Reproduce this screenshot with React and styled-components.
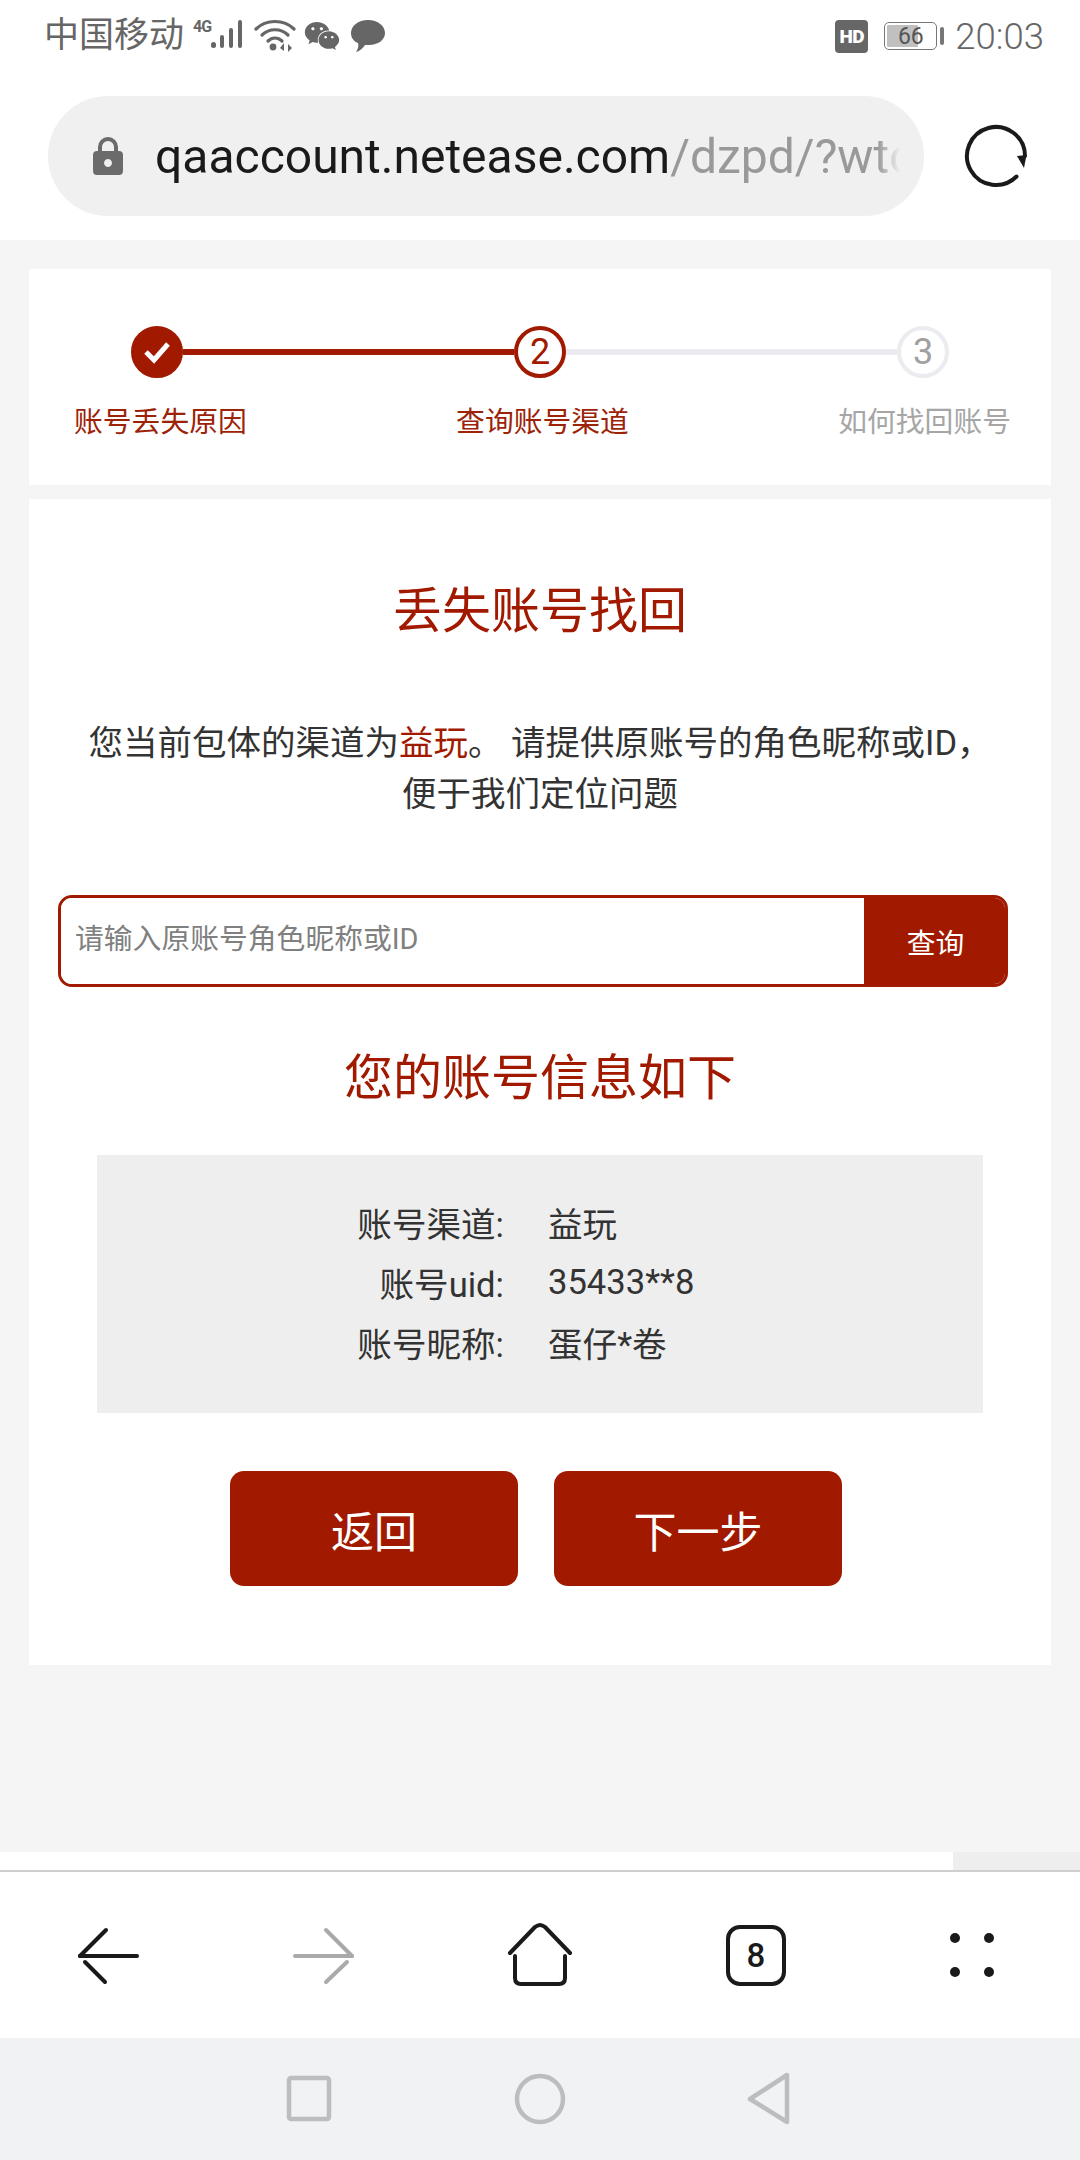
import React from "react";
import styled, { createGlobalStyle } from "styled-components";
import { FaWeixin } from "react-icons/fa";

const RED = "#a11a00";
const FONT = `Roboto, "Noto Sans CJK SC", sans-serif`;

const Global = createGlobalStyle`
  html, body { margin: 0; padding: 0; background: #fff; }
  * { box-sizing: border-box; }
  body { font-family: ${FONT}; }
`;

const Screen = styled.div`
  width: 1080px; height: 2160px; display: flex; flex-direction: column;
  background: #f5f5f6; overflow: hidden; font-family: ${FONT};
`;
const Header = styled.header`
  background: #fff; height: 240px; flex: none; display: flex; flex-direction: column;
`;
const StatusBar = styled.div`
  height: 72px; padding: 0 36px 0 44px; display: flex; align-items: center;
  justify-content: space-between; color: #666;
`;
const StatusGroup = styled.div`display: flex; align-items: center;`;
const Carrier = styled.span`font-size: 35px; line-height: 40px; font-weight: 400;`;
const NetLabel = styled.span`
  font-size: 16px; font-weight: 700; line-height: 16px; align-self: flex-start;
  margin: 3px 0 0 9px; width: 17px; letter-spacing: -1px;
`;
const HdBadge = styled.span`
  width: 33px; height: 33px; border-radius: 4px; background: #666; color: #fff;
  font-size: 19px; font-weight: 900; display: flex; align-items: center; justify-content: center;
  letter-spacing: -0.5px;
`;
const Battery = styled.div`
  width: 53px; height: 28px; margin-left: 16px; border: 1.5px solid #777; border-radius: 5px;
  padding: 2px; position: relative; display: flex;
`;
const BatteryFill = styled.div`width: 66%; background: #c0c0c0; border-radius: 1px;`;
const BatteryText = styled.span`
  position: absolute; inset: 0; display: flex; align-items: center; justify-content: center;
  font-size: 23px; color: #555; line-height: 1;
`;
const BatteryNub = styled.div`width: 4px; height: 18px; margin-left: 3px; background: #777; border-radius: 2px;`;
const Clock = styled.span`font-size: 36.5px; margin-left: 11px; font-weight: 300; color: #666;`;

const AddressRow = styled.div`
  margin-top: 24px; padding-left: 48px; display: flex; align-items: center;
`;
const AddressPill = styled.div`
  width: 876px; height: 120px; border-radius: 60px; background: #f0f0f0;
  display: flex; align-items: center; padding: 0 24px 0 45px;
`;
const LockIcon = styled.svg`width: 30px; height: 40px; flex: none;`;
const Url = styled.div`
  margin-left: 32px; flex: 1; min-width: 0; overflow: hidden; white-space: nowrap;
  font-size: 48px; line-height: 60px; color: #999; padding-top: 2px;
  -webkit-mask-image: linear-gradient(to right, #000 97%, transparent 100%);
  mask-image: linear-gradient(to right, #000 97%, transparent 100%);
`;
const Host = styled.span`color: #1a1a1a;`;
const ReloadIcon = styled.svg`width: 64px; height: 64px; margin-left: 40px; flex: none;`;

const Main = styled.main`
  flex: 1; min-height: 0; padding: 29px 29px 0; display: flex; flex-direction: column; gap: 14px;
`;
const Card = styled.section`background: #fff;`;
const Steps = styled(Card)`height: 216px; padding-top: 57px;`;
const Track = styled.div`display: flex; align-items: center; padding: 0 102px;`;
const StepDot = styled.div`
  width: 52px; height: 52px; border-radius: 50%; flex: none; display: flex; align-items: center;
  justify-content: center; font-size: 36px; font-weight: 400;
  background: ${p => (p.$state === "done" ? RED : "#fff")};
  border: ${p => (p.$state === "todo" ? "4px solid #ececf0" : `4px solid ${RED}`)};
  color: ${p => (p.$state === "todo" ? "#a0a0a0" : RED)};
`;
const TrackLine = styled.div`flex: 1; height: 6px; background: ${p => (p.$on ? RED : "#ececf0")};`;
const StepLabels = styled.div`
  display: flex; justify-content: space-between; margin-top: 24px; padding: 0 40px 0 45px;
`;
const StepLabel = styled.span`
  font-size: 28.8px; line-height: 40px; font-weight: 400; color: ${p => (p.$on ? "#9c2208" : "#a6a6a6")};
`;

const Body = styled(Card)`height: 1166px; padding-top: 78px; display: flex; flex-direction: column; align-items: center;`;
const Title = styled.h1`
  margin: 0; font-size: 49px; line-height: 70px; font-weight: 400; color: ${RED}; text-align: center;
`;
const Intro = styled.p`
  margin: 71px 0 0; width: 940px; font-size: 34.5px; line-height: 51px; font-weight: 400; color: #333;
  text-align: center;
`;
const Accent = styled.span`color: ${RED};`;
const Search = styled.div`
  align-self: flex-start; margin: 75px 0 0 29px; width: 950px; height: 92px; display: flex;
  border: 3px solid ${RED}; border-radius: 14px; overflow: hidden;
`;
const SearchInput = styled.input`
  flex: 1; min-width: 0; border: 0; outline: 0; padding: 0 0 5px 14px; font-size: 28.8px; font-weight: 400;
  font-family: ${FONT}; background: #fff;
  &::placeholder { color: #808080; opacity: 1; }
`;
const SearchButton = styled.button`
  width: 141px; border: 0; background: ${RED}; color: #fff; font-size: 28.8px; font-weight: 400;
  font-family: ${FONT}; padding: 0 0 0 2px;
`;
const Subtitle = styled.h2`
  margin: 57px 0 0; font-size: 49px; line-height: 70px; font-weight: 400; color: ${RED};
`;
const InfoBox = styled.div`
  margin-top: 41px; width: 886px; height: 258px; background: #eeeeee; padding-top: 37px;
  display: grid; grid-template-columns: 407px 1fr; column-gap: 44px; grid-auto-rows: 60px;
  align-items: center; font-size: 34.6px; font-weight: 400; color: #333;
`;
const InfoKey = styled.span`text-align: right;`;
const InfoValue = styled.span``;
const Actions = styled.div`margin: 58px 8px 0 0; display: flex; gap: 36px;`;
const ActionButton = styled.button`
  width: 288px; height: 115px; border: 0; border-radius: 14px; background: ${RED}; color: #fff;
  font-size: 43px; font-weight: 400; font-family: ${FONT}; padding: 0;
`;

const Tail = styled.div`height: 18px; flex: none; background: #fff; display: flex; justify-content: flex-end;`;
const ScrollThumb = styled.div`width: 127px; background: #eeeeee;`;
const Divider = styled.div`height: 2px; flex: none; background: #cfcfcf;`;
const Toolbar = styled.nav`
  height: 166px; flex: none; background: #fff; display: grid; grid-template-columns: repeat(5, 216px);
  justify-items: center; align-items: center;
`;
const ToolIcon = styled.svg`width: 72px; height: 72px; display: block;`;
const TabCount = styled.div`
  width: 60px; height: 61px; border: 4px solid #1a1a1a; border-radius: 14px; display: flex;
  align-items: center; justify-content: center; font-size: 33px; font-weight: 500; color: #1a1a1a;
`;
const SystemBar = styled.div`
  height: 122px; flex: none; background: #f1f2f4; display: flex; align-items: center;
  justify-content: center; gap: 170px;
`;
const SysIcon = styled.svg`width: 60px; height: 60px; display: block;`;

const Signal = () => (
  <svg width="36" height="36" viewBox="0 0 36 36">
    <g fill="#666">
      <rect x="1" y="24" width="5" height="6" rx="2.5" />
      <rect x="10" y="17" width="4" height="13" rx="2" />
      <rect x="19" y="10" width="4" height="20" rx="2" />
      <rect x="28" y="2" width="4" height="28" rx="2" />
    </g>
  </svg>
);
const Wifi = () => (
  <svg width="42" height="36" viewBox="0 0 42 36" style={{ marginLeft: 8 }}>
    <g fill="none" stroke="#666" strokeWidth="3.2" strokeLinecap="round">
      <path d="M2 11 C12 1 30 1 40 11" />
      <path d="M8 17 C15 10 27 10 34 17" />
      <path d="M14 23 C18 19 24 19 28 23" />
    </g>
    <circle cx="19" cy="29" r="3.4" fill="#666" />
    <path d="M30 25 v8 l-4-3z M34 26 v8 l4-4z" fill="#666" />
  </svg>
);
const Bubble = () => (
  <svg width="36" height="34" viewBox="0 0 36 34" style={{ marginLeft: 10 }}>
    <path d="M18 1 C28 1 35 7 35 14 C35 21 28 26 19 26 C17 26 16 26 15 26 C13 29 10 32 6 33 C8 30 9 27 8 24 C3 22 1 18 1 14 C1 7 8 1 18 1Z" fill="#666" />
  </svg>
);

export default function App() {
  return (
    <Screen>
      <Global />
      <Header>
        <StatusBar>
          <StatusGroup>
            <Carrier>中国移动</Carrier>
            <NetLabel>4G</NetLabel>
            <Signal />
            <Wifi />
            <FaWeixin size={36} color="#666" style={{ marginLeft: 8 }} />
            <Bubble />
          </StatusGroup>
          <StatusGroup>
            <HdBadge>HD</HdBadge>
            <Battery>
              <BatteryFill />
              <BatteryText>66</BatteryText>
            </Battery>
            <BatteryNub />
            <Clock>20:03</Clock>
          </StatusGroup>
        </StatusBar>
        <AddressRow>
          <AddressPill>
            <LockIcon viewBox="0 0 30 40">
              <path d="M7 17 V11 a8 8 0 0 1 16 0 V17" fill="none" stroke="#6b6b6b" strokeWidth="4" />
              <path fillRule="evenodd" fill="#6b6b6b" d="M4 15 H26 a4 4 0 0 1 4 4 V35 a4 4 0 0 1 -4 4 H4 a4 4 0 0 1 -4 -4 V19 a4 4 0 0 1 4 -4Z M15 23 a4 4 0 1 0 0.01 0Z" />
            </LockIcon>
            <Url><Host>qaaccount.netease.com</Host>/dzpd/?wtc</Url>
          </AddressPill>
          <ReloadIcon viewBox="0 0 64 64">
            <path d="M52.5 52.5 A29 29 0 1 1 61 32" fill="none" stroke="#1a1a1a" strokeWidth="4" strokeLinecap="round" />
            <path d="M53 32 L62.5 31 L60 44Z" fill="#1a1a1a" />
          </ReloadIcon>
        </AddressRow>
      </Header>

      <Main>
        <Steps>
          <Track>
            <StepDot $state="done">
              <svg width="30" height="26" viewBox="0 0 30 26">
                <path d="M4 13 L12 21 L26 5" fill="none" stroke="#fff" strokeWidth="5" />
              </svg>
            </StepDot>
            <TrackLine $on />
            <StepDot $state="current">2</StepDot>
            <TrackLine />
            <StepDot $state="todo">3</StepDot>
          </Track>
          <StepLabels>
            <StepLabel $on>账号丢失原因</StepLabel>
            <StepLabel $on>查询账号渠道</StepLabel>
            <StepLabel>如何找回账号</StepLabel>
          </StepLabels>
        </Steps>

        <Body>
          <Title>丢失账号找回</Title>
          <Intro>
            您当前包体的渠道为<Accent>益玩</Accent>。 请提供原账号的角色昵称或ID，<br />便于我们定位问题
          </Intro>
          <Search>
            <SearchInput placeholder="请输入原账号角色昵称或ID" />
            <SearchButton>查询</SearchButton>
          </Search>
          <Subtitle>您的账号信息如下</Subtitle>
          <InfoBox>
            <InfoKey>账号渠道:</InfoKey><InfoValue>益玩</InfoValue>
            <InfoKey>账号uid:</InfoKey><InfoValue>35433**8</InfoValue>
            <InfoKey>账号昵称:</InfoKey><InfoValue>蛋仔*卷</InfoValue>
          </InfoBox>
          <Actions>
            <ActionButton>返回</ActionButton>
            <ActionButton>下一步</ActionButton>
          </Actions>
        </Body>
      </Main>

      <Tail><ScrollThumb /></Tail>
      <Divider />
      <Toolbar>
        <ToolIcon viewBox="0 0 72 72">
          <g fill="none" stroke="#1a1a1a" strokeWidth="4" strokeLinecap="round">
            <path d="M8 37 H65" />
            <path d="M8 37 L34 11" />
            <path d="M13 43 L33 63" />
          </g>
        </ToolIcon>
        <ToolIcon viewBox="0 0 72 72">
          <g fill="none" stroke="#aaaaaa" strokeWidth="4" strokeLinecap="round">
            <path d="M7 37 H64" />
            <path d="M64 37 L38 11" />
            <path d="M59 43 L38 63" />
          </g>
        </ToolIcon>
        <ToolIcon viewBox="0 0 72 72">
          <g fill="none" stroke="#1a1a1a" strokeWidth="4" strokeLinecap="round" strokeLinejoin="round">
            <path d="M6 34 L31 8 Q36 4 41 8 L66 34" />
            <path d="M11 37 V59 Q11 65 17 65 H55 Q61 65 61 59 V37" />
          </g>
        </ToolIcon>
        <TabCount>8</TabCount>
        <ToolIcon viewBox="0 0 72 72">
          <g fill="#1a1a1a">
            <circle cx="19" cy="19" r="5" />
            <circle cx="53" cy="19" r="5" />
            <circle cx="19" cy="53" r="5" />
            <circle cx="53" cy="53" r="5" />
          </g>
        </ToolIcon>
      </Toolbar>
      <SystemBar>
        <SysIcon viewBox="0 0 60 60">
          <rect x="9" y="9" width="40" height="41" rx="2" fill="none" stroke="#bcbdbf" strokeWidth="4.5" />
        </SysIcon>
        <SysIcon viewBox="0 0 60 60">
          <circle cx="30" cy="30" r="23" fill="none" stroke="#bcbdbf" strokeWidth="4.5" />
        </SysIcon>
        <SysIcon viewBox="0 0 60 60">
          <path d="M47 6 V53 L10 30Z" fill="none" stroke="#bcbdbf" strokeWidth="4.5" strokeLinejoin="round" />
        </SysIcon>
      </SystemBar>
    </Screen>
  );
}
